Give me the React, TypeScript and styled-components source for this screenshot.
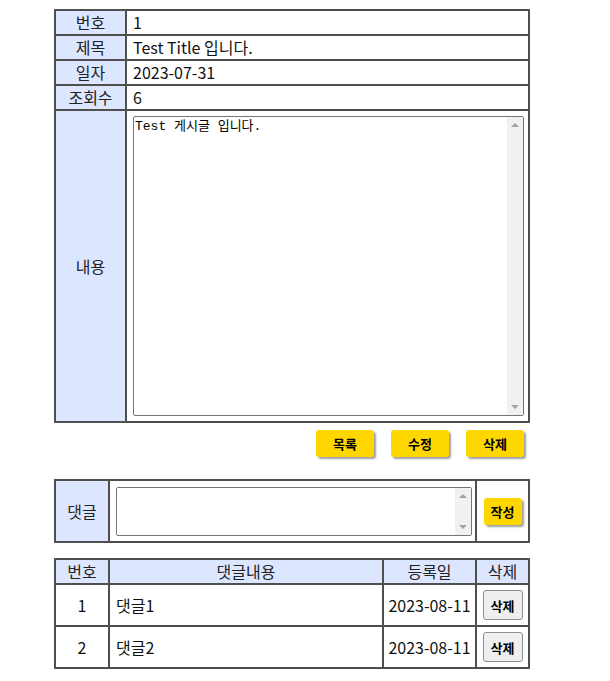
import React from "react";
import styled, { createGlobalStyle } from "styled-components";

const GlobalStyle = createGlobalStyle`
    body {
        margin: 0;
        background: #fff;
        font-family: "Noto Sans CJK KR", "Noto Sans", sans-serif;
        font-size: 16px;
        color: #111;
    }
`

const Page = styled.div`
    padding: 9px 0 12px 54px;
    width: 476px;
`

const Table = styled.table`
    width: 476px;
    border-collapse: collapse;
    border: 2px solid #4f4f4f;
    table-layout: fixed;
`

const Th = styled.th<{ $w?: number }>`
    width: ${p => (p.$w ? `${p.$w}px` : "auto")};
    background: #dde6ff;
    border: 2px solid #4f4f4f;
    font-weight: normal;
    text-align: center;
    line-height: 23px;
    padding: 0;
    color: #222;
`

const Td = styled.td<{ $align?: string; $h?: number; $pad?: string }>`
    border: 2px solid #4f4f4f;
    line-height: 23px;
    padding: ${p => p.$pad || "0 6px"};
    height: ${p => (p.$h ? `${p.$h}px` : "auto")};
    text-align: ${p => p.$align || "left"};
    white-space: nowrap;
`

const BoxCell = styled.td<{ $pad: string }>`
    border: 2px solid #4f4f4f;
    padding: ${p => p.$pad};
    vertical-align: top;
`

// textarea with a classic always-visible scrollbar drawn beside it
const TextFrame = styled.div<{ $w: number; $h: number }>`
    display: flex;
    box-sizing: border-box;
    width: ${p => p.$w}px;
    height: ${p => p.$h}px;
    border: 1px solid #767676;
    border-radius: 2px;
    overflow: hidden;
    background: #fff;
`

const TextBox = styled.textarea`
    flex: 1;
    min-width: 0;
    margin: 0;
    padding: 2px 1px;
    border: none;
    outline: none;
    font-family: "Liberation Mono", "Noto Sans CJK KR", monospace;
    font-size: 13px;
    line-height: 16px;
    color: #000;
    resize: none;
    background: transparent;
`

const ScrollTrack = styled.div`
    width: 16px;
    background: #f1f1f1;
    display: flex;
    flex-direction: column;
    justify-content: space-between;
`

const Arrow = styled.div<{ $down?: boolean }>`
    height: 16px;
    display: flex;
    align-items: center;
    justify-content: center;

    &::after {
        content: "";
        border-left: 4px solid transparent;
        border-right: 4px solid transparent;
        ${p => (p.$down ? "border-top: 4px solid #a3a3a3;" : "border-bottom: 4px solid #a3a3a3;")}
    }
`

const ButtonRow = styled.div`
    display: flex;
    justify-content: flex-end;
    gap: 17px;
    padding: 7px 6px 0 0;
    margin-bottom: 22px;
`

const YellowButton = styled.button<{ $w: number }>`
    width: ${p => p.$w}px;
    height: 27px;
    padding: 0;
    background: #ffd700;
    border: none;
    border-radius: 3px;
    box-shadow: 2px 2px 2px #a0a0a0;
    font-family: "Noto Sans CJK KR", sans-serif;
    font-weight: bold;
    font-size: 13px;
    color: #000;
    cursor: pointer;
`

const GrayButton = styled.button`
    width: 40px;
    height: 30px;
    padding: 0;
    background: #efefef;
    border: 1px solid #8f8f8f;
    border-radius: 3px;
    font-family: "Noto Sans CJK KR", sans-serif;
    font-weight: bold;
    font-size: 13px;
    color: #000;
    cursor: pointer;
`

const Gap = styled.div`
    height: 15px;
`

const ScrollText: React.FC<{ w: number; h: number; value?: string }> = ({ w, h, value }) => (
    <TextFrame $w={w} $h={h}>
        <TextBox defaultValue={value} />
        <ScrollTrack>
            <Arrow />
            <Arrow $down />
        </ScrollTrack>
    </TextFrame>
);

const comments = [
    { no: 1, body: "댓글1", date: "2023-08-11" },
    { no: 2, body: "댓글2", date: "2023-08-11" },
];

const App: React.FC = () => {
    return (
        <Page>
            <GlobalStyle />
            <Table>
                <tbody>
                    <tr><Th $w={69}>번호</Th><Td>1</Td></tr>
                    <tr><Th>제목</Th><Td>Test Title 입니다.</Td></tr>
                    <tr><Th>일자</Th><Td>2023-07-31</Td></tr>
                    <tr><Th>조회수</Th><Td>6</Td></tr>
                    <tr>
                        <Th>내용</Th>
                        <BoxCell $pad="5px 4px 5px 6px">
                            <ScrollText w={391} h={300} value="Test 게시글 입니다." />
                        </BoxCell>
                    </tr>
                </tbody>
            </Table>

            <ButtonRow>
                <YellowButton $w={58}>목록</YellowButton>
                <YellowButton $w={58}>수정</YellowButton>
                <YellowButton $w={58}>삭제</YellowButton>
            </ButtonRow>

            {/* comment form */}
            <Table>
                <tbody>
                    <tr>
                        <Th $w={52}>댓글</Th>
                        <BoxCell $pad="6px 3px 5px 6px">
                            <ScrollText w={356} h={49} />
                        </BoxCell>
                        <Td $align="center" $pad="0" style={{ width: 51 }}>
                            <YellowButton $w={38}>작성</YellowButton>
                        </Td>
                    </tr>
                </tbody>
            </Table>

            <Gap />

            {/* comment list */}
            <Table>
                <thead>
                    <tr>
                        <Th $w={52}>번호</Th>
                        <Th>댓글내용</Th>
                        <Th $w={91}>등록일</Th>
                        <Th $w={51}>삭제</Th>
                    </tr>
                </thead>
                <tbody>
                    {comments.map(c => (
                        <tr key={c.no}>
                            <Td $align="center" $h={40}>{c.no}</Td>
                            <Td>{c.body}</Td>
                            <Td $align="center" $pad="0">{c.date}</Td>
                            <Td $align="center" $pad="0">
                                <GrayButton>삭제</GrayButton>
                            </Td>
                        </tr>
                    ))}
                </tbody>
            </Table>
        </Page>
    );
}

export default App;
